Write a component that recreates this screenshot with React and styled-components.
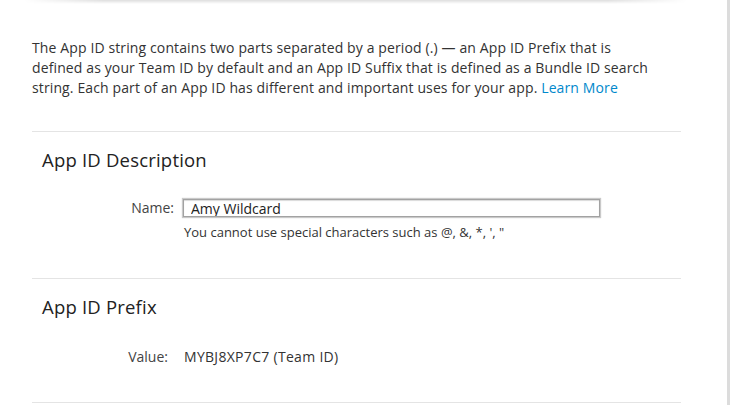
import React from 'react';
import styled, { createGlobalStyle } from 'styled-components';

const GlobalStyle = createGlobalStyle`
  body {
    margin: 0;
    background: #fff;
    font-family: "Open Sans", "Liberation Sans", sans-serif;
    color: #333;
  }
`;

const Page = styled.div`
  width: 727px;
  min-height: 405px;
  border-right: 3px solid #dcdcdc;
  overflow: hidden;
`;

const TopShadow = styled.div`
  height: 4px;
  margin: 0 40px 0 24px;
  background: linear-gradient(to bottom, rgba(0, 0, 0, 0.13), rgba(0, 0, 0, 0));
  -webkit-mask-image: linear-gradient(to right, transparent, #000 12%, #000 88%, transparent);
  mask-image: linear-gradient(to right, transparent, #000 12%, #000 88%, transparent);
`;

const Content = styled.div`
  padding: 0 46px 0 32px;
`;

const Intro = styled.p`
  margin: 34px 0 33px;
  font-size: 14px;
  line-height: 20px;
  letter-spacing: 0.12px;
  color: #333;
  white-space: nowrap;
`;

const Link = styled.a`
  color: #0088cc;
  text-decoration: none;
`;

const Section = styled.section`
  border-top: 1px solid #e4e4e4;
  padding: 16px 0 ${p => p.bottom}px;
`;

const Heading = styled.h2`
  margin: 0 0 ${p => p.gap}px;
  padding-left: 10px;
  font-size: 18.5px;
  font-weight: 400;
  line-height: 24px;
  letter-spacing: 0.2px;
  color: #222;
`;

const Row = styled.div`
  display: grid;
  grid-template-columns: 142px 1fr;
  column-gap: 8px;
  font-size: 14px;
  line-height: 20px;
`;

const Label = styled.div`
  text-align: right;
  padding-right: ${p => p.inset || 0}px;
  color: #444;
  line-height: ${p => p.lh || 20}px;
`;

const Field = styled.div`
  display: flex;
  flex-direction: column;
`;

const TextInput = styled.input`
  box-sizing: border-box;
  width: 417px;
  height: 18px;
  margin: 0 0 0 1px;
  padding: 0 7px;
  border: 1px solid #a2a2a2;
  border-radius: 0;
  box-shadow: 0 0 1px 1px #c9c9c9, inset 0 1px 1px rgba(0, 0, 0, 0.15);
  background: #fff;
  font-family: "Open Sans", "Liberation Sans", sans-serif;
  font-size: 14px;
  color: #222;
  outline: none;
`;

const Hint = styled.div`
  margin-top: 5px;
  padding-left: 2px;
  font-size: 13px;
  color: #333;
`;

const Value = styled.div`
  padding-left: 2px;
  letter-spacing: 0.3px;
  color: #333;
`;

export default function App() {
  return (
    <Page>
      <GlobalStyle />
      <TopShadow />
      <Content>
        <Intro>
          The App ID string contains two parts separated by a period (.) — an App ID Prefix that is
          <br />
          defined as your Team ID by default and an App ID Suffix that is defined as a Bundle ID search
          <br />
          string. Each part of an App ID has different and important uses for your app.{' '}
          <Link href="#">Learn More</Link>
        </Intro>

        <Section bottom={36}>
          <Heading gap={27}>App ID Description</Heading>
          <Row>
            <Label lh={18}>Name:</Label>
            <Field>
              <TextInput defaultValue="Amy Wildcard" />
              <Hint>You cannot use special characters such as @, &amp;, *, ', "</Hint>
            </Field>
          </Row>
        </Section>

        <Section bottom={35}>
          <Heading gap={28}>App ID Prefix</Heading>
          <Row>
            <Label inset={6}>Value:</Label>
            <Value>MYBJ8XP7C7 (Team ID)</Value>
          </Row>
        </Section>

        <Section bottom={0} />
      </Content>
    </Page>
  );
}
